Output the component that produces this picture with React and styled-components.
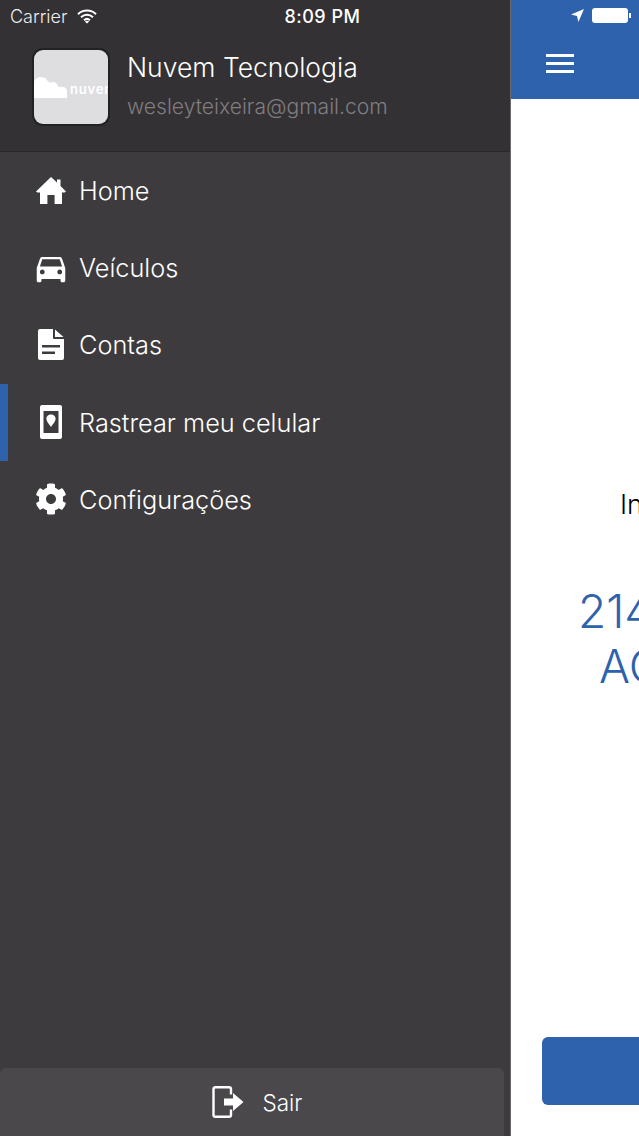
import React from 'react'
import styled, { createGlobalStyle } from 'styled-components'
import { FaCog } from 'react-icons/fa'
import { MdDirectionsCar } from 'react-icons/md'

const GlobalStyle = createGlobalStyle`
    html, body {
        margin: 0;
        padding: 0;
        background: #fff;
    }

    body {
        font-family: Inter, "Liberation Sans", sans-serif;
    }
`

const HomeIcon = () => (
    <svg width="30" height="28" viewBox="0 0 30 28" fill="#fff">
        <path d="M15 0 L21 5.6 V2.5 H24.5 V9 L30 14.4 L28.6 15.6 H26 V27 H18.6 V18 H11.4 V27 H4 V15.6 H1.4 L0 14.4 Z" />
    </svg>
)

const DocIcon = () => (
    <svg width="26" height="31" viewBox="0 0 26 31" fill="#fff">
        <path fillRule="evenodd" d="M2 0 H15 V9 Q15 10 16 10 H26 V29 Q26 31 24 31 H2 Q0 31 0 29 V2 Q0 0 2 0 Z M4 16 V18.5 H22 V16 Z M4 22.5 V25 H17 V22.5 Z" />
        <path d="M17 0.5 L25.5 8 H17 Z" />
    </svg>
)

const PhoneIcon = () => (
    <svg width="22" height="34" viewBox="0 0 22 34" fill="#fff">
        <path fillRule="evenodd" d="M2 0 H20 Q22 0 22 2 V32 Q22 34 20 34 H2 Q0 34 0 32 V2 Q0 0 2 0 Z M3.5 6 V28 H18.5 V6 Z" />
        <path d="M11 9.5 C14.2 9.5 15.6 11.8 15.6 13.8 C15.6 16.4 12.6 19.8 11 22 C9.4 19.8 6.4 16.4 6.4 13.8 C6.4 11.8 7.8 9.5 11 9.5 Z" />
    </svg>
)

const ExitIcon = () => (
    <svg width="32" height="32" viewBox="0 0 32 32" fill="none">
        <path d="M19 8.5 V3 Q19 1.2 17 1.2 H3.5 Q1.5 1.2 1.5 3 V29 Q1.5 30.8 3.5 30.8 H17 Q19 30.8 19 29 V23.5" stroke="#fff" strokeWidth="2.4" />
        <path d="M12 12.5 H21 V7 L31.5 16 L21 25 V19.5 H12 Z" fill="#fff" />
    </svg>
)

const WifiIcon = () => (
    <svg width="20" height="15" viewBox="0 0 20 15" fill="none" stroke="#fff" strokeWidth="2">
        <path d="M1 5.2 C6 0.4 14 0.4 19 5.2" />
        <path d="M4 8.3 C7.4 5 12.6 5 16 8.3" />
        <path d="M7 11.2 C8.8 9.6 11.2 9.6 13 11.2" />
        <path d="M10 14.6 L7.8 12.4 C9 11.4 11 11.4 12.2 12.4 Z" fill="#fff" stroke="none" />
    </svg>
)

const LocationIcon = () => (
    <svg width="13" height="13" viewBox="0 0 13 13" fill="#fff">
        <path d="M13 0 L7.4 13 L6 7 L0 5.6 Z" />
    </svg>
)

const CloudLogo = () => (
    <svg width="33" height="21" viewBox="0 0 33 21" fill="#fff" style={{ flexShrink: 0 }}>
        <path d="M0 5 Q1 1 4 1 Q6 -1 9 0.5 Q12 0 13 3.5 Q15 4 16 6 Q20 3.5 23 7 Q24 9.5 25 10 Q31 8.5 33 13 V21 H0 Z" />
    </svg>
)

const MENU_ITEMS = [
    { label: 'Home', icon: <HomeIcon /> },
    { label: 'Veículos', icon: <MdDirectionsCar size={38} color="#fff" /> },
    { label: 'Contas', icon: <DocIcon /> },
    { label: 'Rastrear meu celular', icon: <PhoneIcon />, active: true },
    { label: 'Configurações', icon: <FaCog size={32} color="#fff" /> },
]

const App = () => {
    return (
        <>
            <GlobalStyle />
            <Screen>
                <Drawer>
                    <DrawerTop>
                        <StatusLeft>
                            <Carrier>Carrier</Carrier>
                            <WifiIcon />
                            <Clock>8:09 PM</Clock>
                        </StatusLeft>
                        <Profile>
                            <Avatar>
                                <CloudLogo />
                                <LogoText>nuvem</LogoText>
                            </Avatar>
                            <UserInfo>
                                <UserName>Nuvem Tecnologia</UserName>
                                <UserEmail>wesleyteixeira@gmail.com</UserEmail>
                            </UserInfo>
                        </Profile>
                    </DrawerTop>

                    <Menu>
                        {MENU_ITEMS.map(item => (
                            <MenuItem key={item.label} $active={item.active}>
                                <MenuIcon>{item.icon}</MenuIcon>
                                <span>{item.label}</span>
                            </MenuItem>
                        ))}
                    </Menu>

                    <Logout>
                        <ExitIcon />
                        <span>Sair</span>
                    </Logout>
                </Drawer>

                <Main>
                    <NavBar>
                        <StatusRight>
                            <LocationIcon />
                            <Battery />
                        </StatusRight>
                        <Hamburger>
                            <span />
                            <span />
                            <span />
                        </Hamburger>
                    </NavBar>

                    <Content>
                        <InfoLine>Informações</InfoLine>
                        <BigLine $indent={67}>214578963</BigLine>
                        <BigLine $indent={88}>AC1234</BigLine>
                    </Content>

                    <ActionButton />
                </Main>
            </Screen>
        </>
    )
}

const Screen = styled.div`
    width: 639px;
    height: 1136px;
    display: flex;
    overflow: hidden;
`

const Drawer = styled.div`
    width: 510px;
    flex-shrink: 0;
    display: flex;
    flex-direction: column;
    background-color: #3d3b3e;
    border-right: 1px solid #6b6a6c;
`

const DrawerTop = styled.div`
    height: 152px;
    box-sizing: border-box;
    background-color: #333134;
    border-bottom: 1px solid #29282a;
`

const StatusLeft = styled.div`
    height: 32px;
    padding-left: 10px;
    display: flex;
    align-items: center;
    gap: 10px;
    color: #fff;
    font-size: 18px;
`

const Carrier = styled.span`
    color: #eee;
    font-weight: 350;
`

const Clock = styled.span`
    margin-left: 177px;
    font-weight: 500;
    letter-spacing: 0.5px;
`

const Profile = styled.div`
    display: flex;
    align-items: center;
    gap: 19px;
    padding: 18px 0 0 34px;
`

const Avatar = styled.div`
    width: 74px;
    height: 74px;
    flex-shrink: 0;
    display: flex;
    align-items: center;
    gap: 3px;
    box-sizing: border-box;
    overflow: hidden;
    background-color: #dedde0;
    border-radius: 9px;
    box-shadow: 0 0 0 2px #222123;
`

const LogoText = styled.span`
    padding-top: 3px;
    color: #fff;
    font-size: 13px;
    font-weight: 600;
    letter-spacing: 0.8px;
`

const UserInfo = styled.div`
    display: flex;
    flex-direction: column;
    gap: 11px;
    margin-top: -4px;
`

const UserName = styled.span`
    color: #fff;
    font-size: 26.5px;
    font-weight: 350;
    line-height: 32px;
`

const UserEmail = styled.span`
    color: #7f7d80;
    font-size: 21.1px;
    font-weight: 350;
    line-height: 26px;
`

const Menu = styled.div`
    flex: 1;
    display: flex;
    flex-direction: column;
`

const MenuItem = styled.div`
    height: 77.2px;
    box-sizing: border-box;
    display: flex;
    align-items: center;
    padding-left: 28px;
    color: #fff;
    font-size: 25.3px;
    font-weight: 350;
    border-left: 8px solid ${props => props.$active ? '#2f62ac' : 'transparent'};
`

const MenuIcon = styled.div`
    width: 30px;
    margin-right: 13px;
    display: flex;
    justify-content: center;
    align-items: center;

    svg {
        flex-shrink: 0;
    }
`

const Logout = styled.div`
    height: 68px;
    margin-right: 6px;
    padding-left: 10px;
    display: flex;
    justify-content: center;
    align-items: center;
    gap: 19px;
    color: #fff;
    font-size: 22.5px;
    font-weight: 350;
    background-color: #4a484b;
    border-top-left-radius: 6px;
    border-top-right-radius: 6px;
`

const Main = styled.div`
    flex: 1;
    min-width: 0;
    display: flex;
    flex-direction: column;
    background-color: #fff;
    overflow: hidden;
`

const NavBar = styled.div`
    height: 99px;
    flex-shrink: 0;
    box-sizing: border-box;
    padding: 8px 0 0 35px;
    background-color: #2f62ac;
`

const StatusRight = styled.div`
    display: flex;
    align-items: center;
    gap: 8px;
    height: 15px;
    padding-left: 25px;
`

const Battery = styled.div`
    position: relative;
    width: 36px;
    height: 15px;
    background-color: #fff;
    border-radius: 3px;

    &::after {
        content: '';
        position: absolute;
        right: -3px;
        top: 5px;
        width: 2px;
        height: 5px;
        background-color: #fff;
    }
`

const Hamburger = styled.div`
    margin-top: 31px;
    width: 28px;
    display: flex;
    flex-direction: column;
    gap: 5px;

    span {
        display: block;
        height: 3px;
        background-color: #fff;
    }
`

const Content = styled.div`
    flex: 1;
    padding-top: 389px;
`

const InfoLine = styled.div`
    padding-left: 109px;
    margin-bottom: 62px;
    color: #000;
    font-size: 27px;
    font-weight: 350;
    line-height: 34px;
    white-space: nowrap;
`

const BigLine = styled.div`
    padding-left: ${props => props.$indent}px;
    color: #2f62ac;
    font-size: 46px;
    font-weight: 350;
    line-height: 55px;
    white-space: nowrap;
`

const ActionButton = styled.div`
    height: 68px;
    margin: 0 -200px 31px 31px;
    flex-shrink: 0;
    background-color: #2f62ac;
    border-radius: 6px;
`

export default App
